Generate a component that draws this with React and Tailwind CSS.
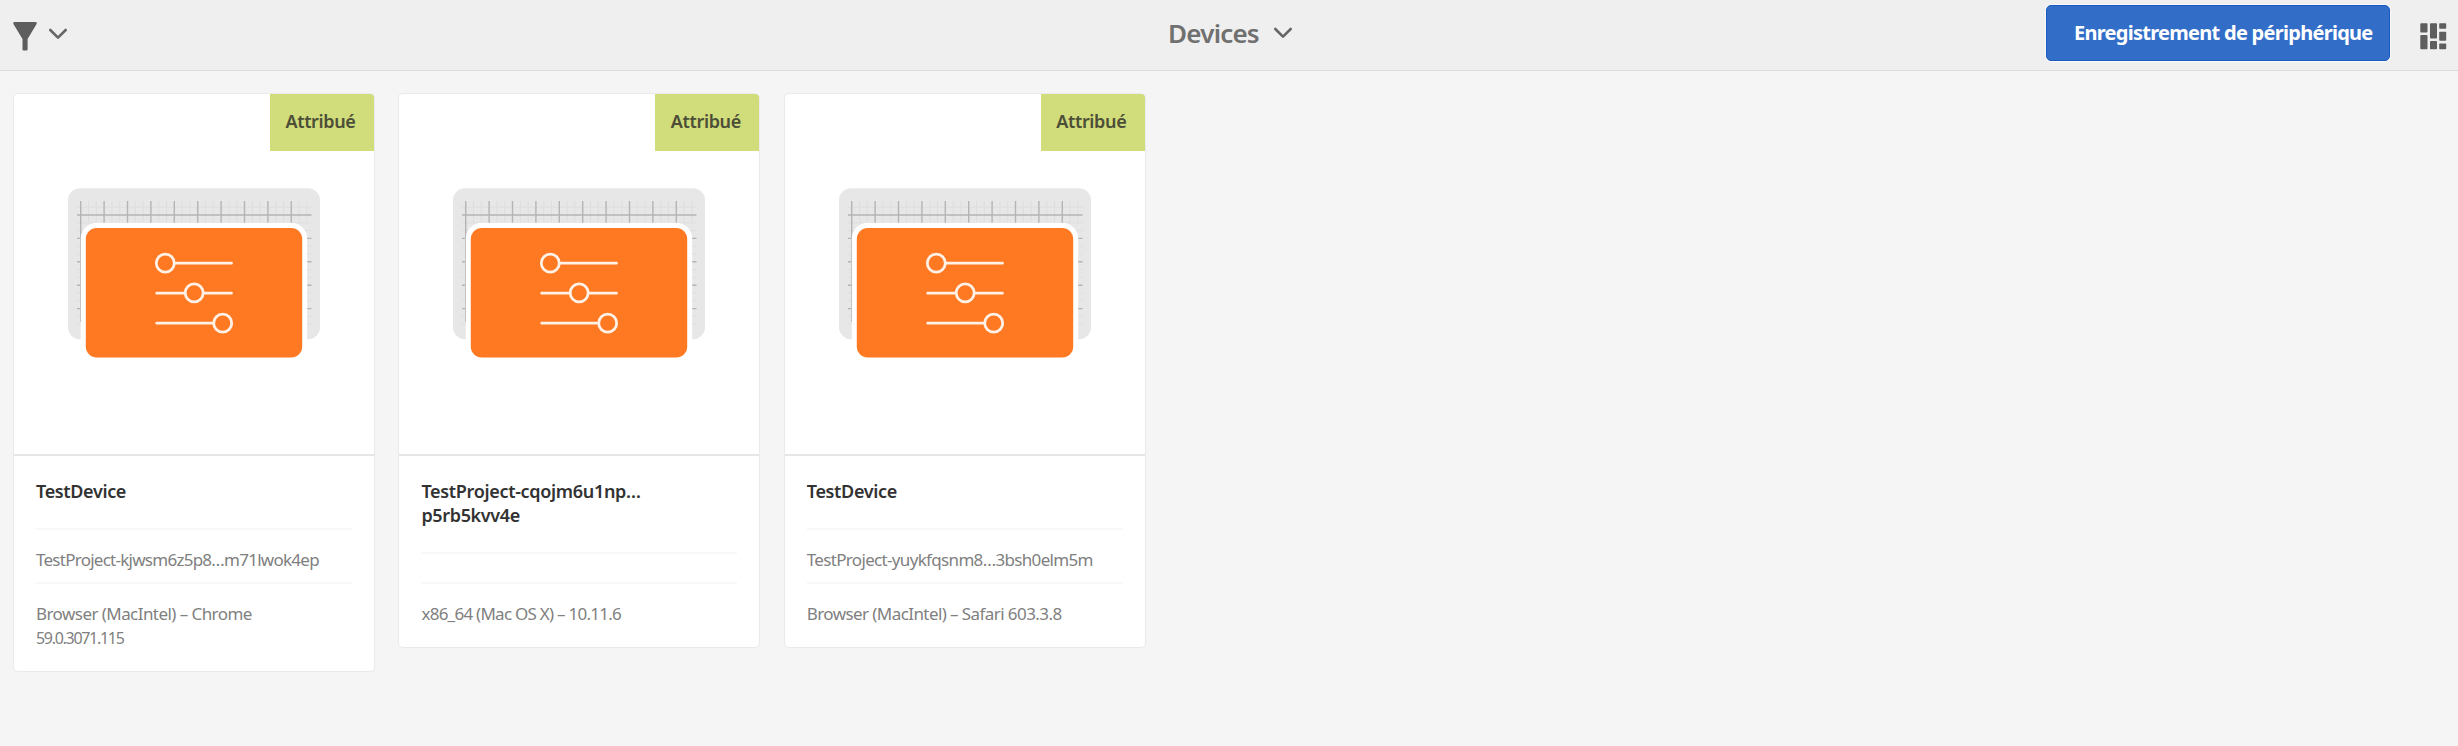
const cards = [
  {
    title: [{ text: "TestDevice", className: "tracking-[-0.35px]" }],
    project: { text: "TestProject-kjwsm6z5p8…m71lwok4ep", className: "tracking-[-0.74px]" },
    details: [
      { text: "Browser (MacIntel) – Chrome", className: "tracking-[-0.56px]" },
      { text: "59.0.3071.115", className: "text-base leading-6 tracking-[-1.3px]" },
    ],
  },
  {
    title: [
      { text: "TestProject-cqojm6u1np…", className: "tracking-[-0.32px]" },
      { text: "p5rb5kvv4e", className: "tracking-[-0.35px]" },
    ],
    project: null,
    details: [{ text: "x86_64 (Mac OS X) – 10.11.6", className: "tracking-[-0.74px]" }],
  },
  {
    title: [{ text: "TestDevice", className: "tracking-[-0.35px]" }],
    project: { text: "TestProject-yuykfqsnm8…3bsh0elm5m", className: "tracking-[-0.67px]" },
    details: [{ text: "Browser (MacIntel) – Safari 603.3.8", className: "tracking-[-0.58px]" }],
  },
];

const majorX = [0, 1, 2, 3, 4, 5, 6, 7, 8, 9];
const majorY = [0, 1, 2, 3, 4];

function Chevron() {
  return (
    <svg width="20" height="14" viewBox="0 0 20 14" fill="none" stroke="#666" strokeWidth="2.6" strokeLinecap="round" strokeLinejoin="round">
      <path d="M2.3 3 L10 10.6 L17.7 3" />
    </svg>
  );
}

function FilterIcon() {
  return (
    <svg width="24" height="29" viewBox="0 0 24 29" fill="#5e5e5e">
      <path d="M0.9 0 H23.1 Q24.2 1 23.3 2.6 L14.6 17 V27.4 Q14.5 28.4 13.6 28.4 H10.4 Q9.5 28.4 9.5 27.4 V17 L0.7 2.6 Q-0.2 1 0.9 0 Z" />
    </svg>
  );
}

function CardViewIcon() {
  return (
    <svg width="27" height="27" viewBox="0 0 27 27" fill="#5e5e5e">
      <rect x="0.3" y="0.3" width="7.2" height="9.2" rx="0.8" />
      <rect x="0.3" y="12" width="7.2" height="14.2" rx="0.8" />
      <rect x="10" y="0.3" width="7" height="15.2" rx="0.8" />
      <rect x="10" y="18" width="7" height="8.2" rx="0.8" />
      <rect x="19.2" y="0.3" width="7" height="5.4" rx="0.8" />
      <rect x="19.2" y="8.7" width="7" height="9" rx="0.8" />
      <rect x="19.2" y="20.4" width="7" height="5.8" rx="0.8" />
    </svg>
  );
}

function DeviceArt() {
  return (
    <svg width="252" height="170" viewBox="18 18 252 170" className="block">
      <rect x="18" y="18.3" width="252" height="151" rx="12" fill="#e7e7e7" />
      <g stroke="#dedede" strokeWidth="1">
        {majorX.map((i) => (
          <path key={i} d={`M${38.5 + i * 23.4} 31 V52 M${46.3 + i * 23.4} 31 V52`} />
        ))}
        <path d="M27 37.2 H261.5" />
        {majorY.map((i) => (
          <path key={i} d={`M27 ${52.8 + i * 23.4} H261.5 M27 ${60.6 + i * 23.4} H261.5`} />
        ))}
      </g>
      <g stroke="#b4b4b4" strokeWidth="1.4">
        {majorX.map((i) => (
          <path key={i} d={`M${30.7 + i * 23.4} 31 V${i === 0 ? 152 : 60}`} />
        ))}
        {majorY.map((i) => (
          <path key={i} d={`M27 ${45 + i * 23.4} H261.5`} />
        ))}
      </g>
      <rect x="30.8" y="52.8" width="226.4" height="140" rx="16" fill="#fff" />
      <rect x="35.8" y="58" width="216.4" height="129.4" rx="11" fill="#ff7822" />
      <g fill="none" stroke="#fff1e6" strokeWidth="2.8" strokeLinecap="round">
        <circle cx="115.3" cy="93.2" r="9" />
        <path d="M125 93.2 H181.5 M106.7 123.2 H134.5 M154 123.2 H181.5 M106.7 153.2 H163" />
        <circle cx="144.2" cy="122.8" r="9" />
        <circle cx="172.7" cy="153.2" r="9" />
      </g>
    </svg>
  );
}

function Line({ line }) {
  return <span className={`block whitespace-nowrap ${line.className}`}>{line.text}</span>;
}

function Card({ card }) {
  return (
    <article className="relative w-[362px] overflow-hidden rounded-[5px] border border-[#eaeaea] bg-white">
      <div className="flex h-[362px] justify-center border-b-2 border-[#e6e6e6] pt-[94px]">
        <DeviceArt />
      </div>
      <div className="absolute top-0 right-0 flex h-[57px] w-[104px] items-center justify-center bg-[#d1dc7a] pr-[3px] pb-[3px] text-lg font-semibold tracking-[-0.35px] text-[#4c4e38]">
        Attribué
      </div>
      <div className="px-[22px] pt-[23px] pb-[21px] text-[17px] text-[#808080]">
        <h2 className="text-lg leading-6 font-semibold text-[#323232]">
          {card.title.map((l) => <Line key={l.text} line={l} />)}
        </h2>
        <div className={`mt-[25px] border-y-2 border-[#f8f8f8] leading-6 ${card.project ? "h-[56px] pt-[18px]" : "h-[32px]"}`}>
          {card.project && <Line line={card.project} />}
        </div>
        <p className="pt-[18px] leading-6">
          {card.details.map((l) => <Line key={l.text} line={l} />)}
        </p>
      </div>
    </article>
  );
}

export default function App() {
  return (
    <div className="flex h-[746px] w-full flex-col bg-[#f5f5f5] font-['Noto_Sans',sans-serif]">
      <header className="grid h-[71px] shrink-0 grid-cols-3 border-b border-[#dcdcdc] bg-[#efefef]">
        <div className="flex items-start pl-[13px]">
          <div className="pt-[22px]"><FilterIcon /></div>
          <div className="pt-[27px] pl-[11px]"><Chevron /></div>
        </div>
        <div className="flex items-start justify-center pl-[3px]">
          <span className="pt-[15px] text-[26px] leading-9 font-semibold tracking-[-0.8px] text-[#707070]">Devices</span>
          <div className="pt-[26px] pl-[14px]"><Chevron /></div>
        </div>
        <div className="flex items-start justify-end pr-[11px]">
          <button className="mt-[5px] flex h-14 w-[344px] items-center rounded-[5px] border border-[#1a5bc2] bg-[#326ec8] pl-[27px] text-xl font-bold tracking-[-0.72px] whitespace-nowrap text-white ring-1 ring-[#f8f8f8]">
            Enregistrement de périphérique
          </button>
          <div className="pt-[23px] pl-[30px]"><CardViewIcon /></div>
        </div>
      </header>
      <main className="flex items-start gap-[23.4px] pt-[22px] pl-[13px]">
        {cards.map((card, i) => <Card key={i} card={card} />)}
      </main>
    </div>
  );
}
